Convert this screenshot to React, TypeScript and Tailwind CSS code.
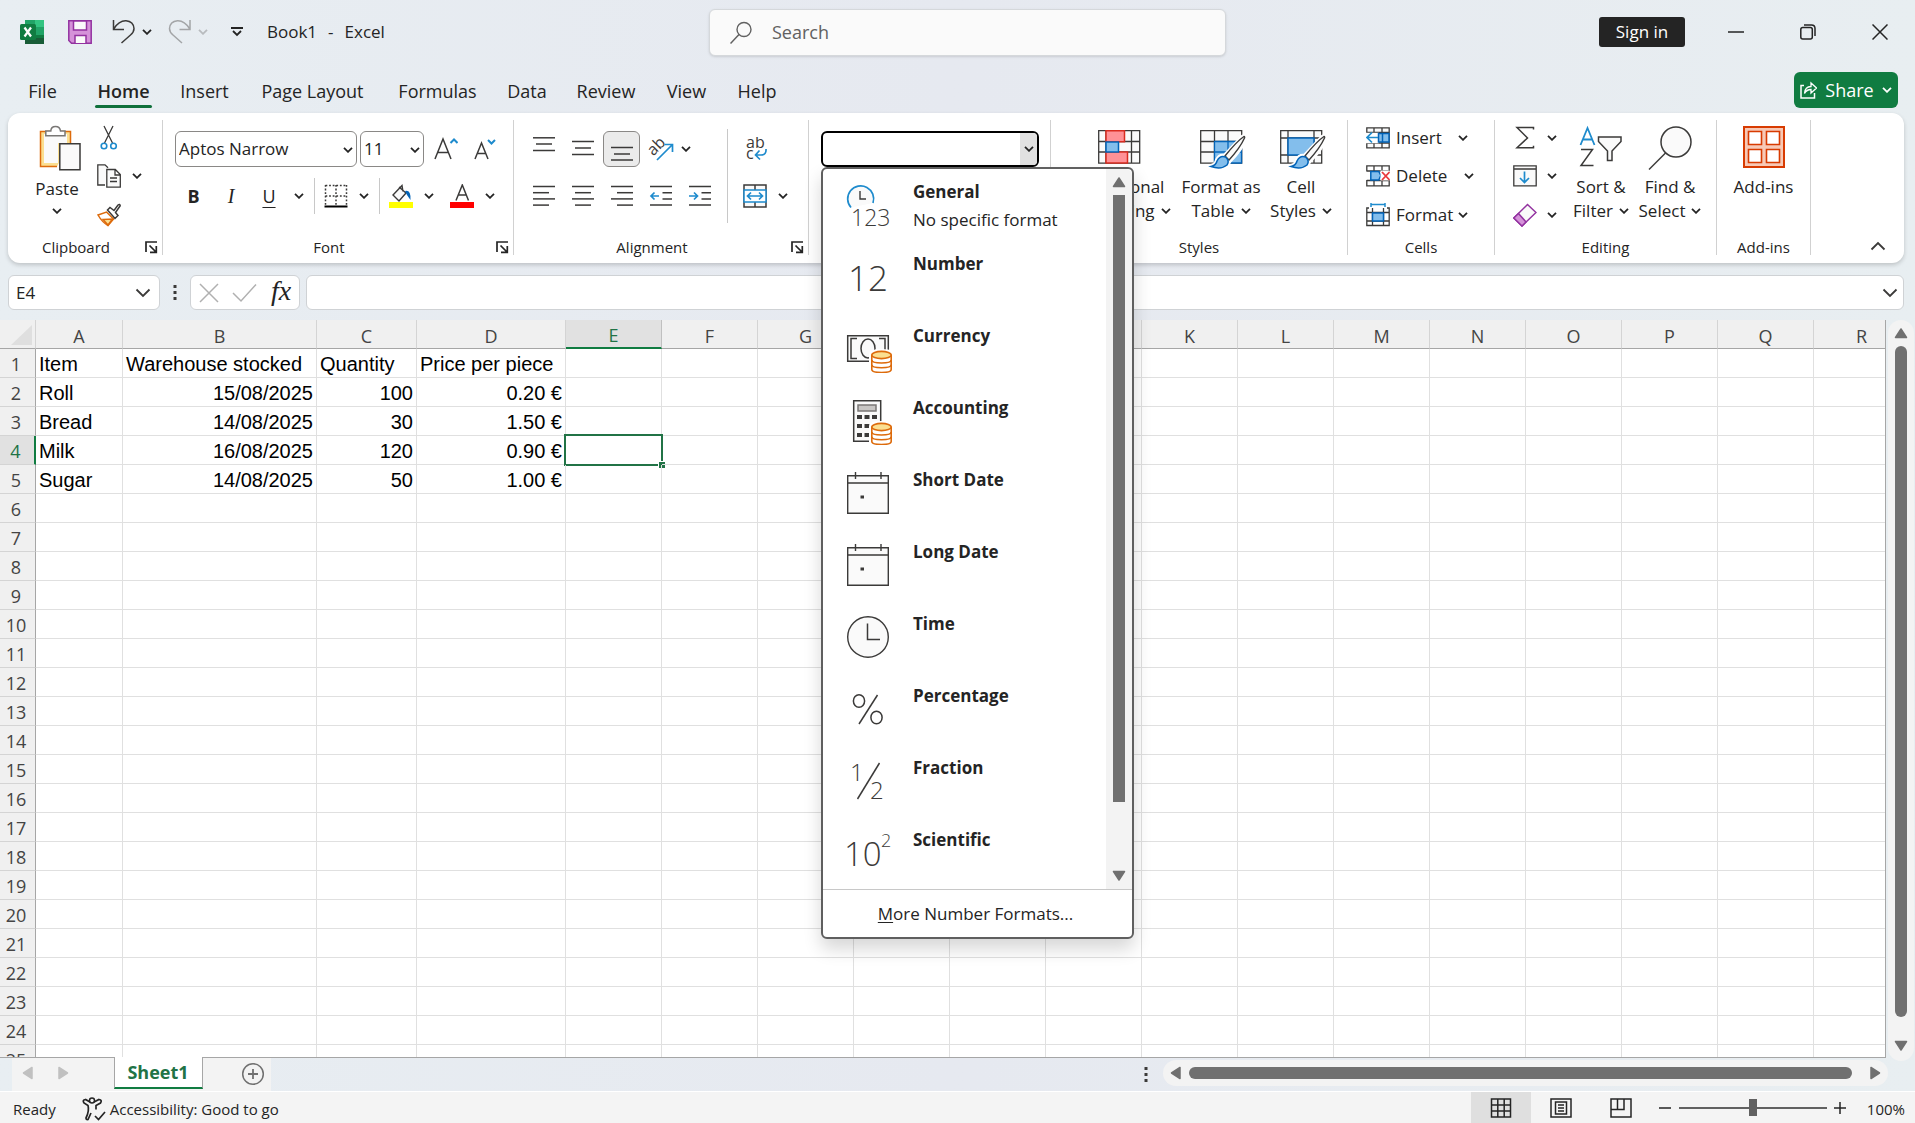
import { ReactNode, useState } from "react";

const TABS = [
  { label: "File", width: "w-[77px]" },
  { label: "Home", width: "w-[85px]" },
  { label: "Insert", width: "w-[77px]" },
  { label: "Page Layout", width: "w-[139px]" },
  { label: "Formulas", width: "w-[111px]" },
  { label: "Data", width: "w-[68px]" },
  { label: "Review", width: "w-[90px]" },
  { label: "View", width: "w-[71px]" },
  { label: "Help", width: "w-[70px]" },
];

const COLUMNS = "ABCDEFGHIJKLMNOPQR".split("");
const ROW_COUNT = 25;

const COLUMN_WIDTHS: Record<string, string> = {
  A: "w-[87px]",
  B: "w-[194px]",
  C: "w-[100px]",
  D: "w-[149px]",
};

const SHEET: Record<number, string[]> = {
  1: ["Item", "Warehouse stocked", "Quantity", "Price per piece"],
  2: ["Roll", "15/08/2025", "100", "0.20 €"],
  3: ["Bread", "14/08/2025", "30", "1.50 €"],
  4: ["Milk", "16/08/2025", "120", "0.90 €"],
  5: ["Sugar", "14/08/2025", "50", "1.00 €"],
};

const INK = "#3b3a39";
const BLUE = "#1e8bcd";

type IconProps = { children: ReactNode; w?: number; h?: number; className?: string };

const Icon = ({ children, w = 24, h = 24, className = "" }: IconProps) => (
  <svg
    width={w}
    height={h}
    viewBox={`0 0 ${w} ${h}`}
    fill="none"
    stroke={INK}
    strokeWidth="1.5"
    className={`shrink-0 ${className}`}
    aria-hidden="true"
  >
    {children}
  </svg>
);

const Chevron = ({ color = "#242424", className = "" }) => (
  <Icon w={10} h={6} className={className}>
    <path d="M1 .8l4 4 4-4" stroke={color} strokeWidth="1.8" />
  </Icon>
);

const WideChevron = () => (
  <Icon w={16} h={10}>
    <path d="M1.5 1.5L8 8l6.500-6.500" strokeWidth="1.800" />
  </Icon>
);

const Triangle = ({ d, color = "#707070" }: { d: string; color?: string }) => (
  <Icon w={14} h={14}>
    <path d={d} fill={color} stroke={color} strokeLinejoin="round" />
  </Icon>
);

const UP = "M7 3L12.500 11.500H1.500Z";
const DOWN = "M7 11L1.500 2.500H12.500Z";
const LEFT = "M2.500 7L11 1.500V12.500Z";
const RIGHT = "M11.500 7L3 1.500V12.500Z";

const Dots = () => (
  <svg width="4" height="16" viewBox="0 0 4 16" fill="#3b3a39" aria-hidden="true">
    <path d="M.5 0h3v3h-3zM.5 6h3v3h-3zM.5 12h3v3h-3z" />
  </svg>
);

const Lines = ({ rows }: { rows: [number, number, number][] }) => (
  <Icon>
    {rows.map(([x1, x2, y]) => (
      <path key={y} d={`M${x1} ${y}H${x2}`} />
    ))}
  </Icon>
);

const IconButton = ({
  label,
  className = "",
  children,
}: {
  label: string;
  className?: string;
  children: ReactNode;
}) => (
  <button type="button" aria-label={label} className={`flex items-center justify-center ${className}`}>
    {children}
  </button>
);

const Divider = ({ className }: { className: string }) => (
  <div className={`w-px shrink-0 bg-[#c8c8c8] ${className}`} />
);

const Group = ({
  title,
  width,
  launcher = false,
  children,
}: {
  title: string;
  width: string;
  launcher?: boolean;
  children: ReactNode;
}) => (
  <section aria-label={title} className={`flex shrink-0 flex-col border-r border-[#d1d1d1] ${width}`}>
    <div className="flex-1">{children}</div>
    <div className="flex h-4 items-center">
      <p className="flex-1 text-center text-[15px] leading-4">{title}</p>
      {launcher && (
        <IconButton label={`${title} settings`} className="mr-1 w-[14px]">
          <Icon w={13} h={13}>
            <path d="M1 11V1h11M4.500 4.500L11 11M11.300 5v6.300H5" stroke="#242424" strokeWidth="1.700" />
          </Icon>
        </IconButton>
      )}
    </div>
  </section>
);

const BigButton = ({
  icon,
  lines,
  width,
  chevron = true,
}: {
  icon: ReactNode;
  lines: string[];
  width: string;
  chevron?: boolean;
}) => (
  <button type="button" className={`flex shrink-0 flex-col items-center pt-[5px] text-[17px] leading-6 ${width}`}>
    <span className="flex h-[50px] items-start">{icon}</span>
    {lines.map((line, i) => (
      <span key={line} className="flex items-center gap-[6px] whitespace-nowrap">
        {line}
        {chevron && i === lines.length - 1 && <Chevron />}
      </span>
    ))}
  </button>
);

const Brush = () => (
  <g>
    <path d="M44 12L26 31l4.500 4.500Q42 24 46 13.500Q46 11 44 12Z" fill="#fff" stroke="#fff" strokeWidth="5" />
    <path d="M12 41Q17 40 18 35Q21 29 27 31.500Q32 36 28 41Q22 46 12 41Z" fill="#83beec" stroke="#fff" strokeWidth="4" />
    <path d="M45 11.500Q38 16 26 31l4 4Q41 23 45.500 13Q46 11.500 45 11.500Z" fill="#fafafa" strokeWidth="1.400" />
    <path d="M12 41.500Q17 40.500 18 36Q21 30 26.500 32Q31 36 28 40Q22 45 12 41.500Z" fill="#83beec" stroke="#0364b8" />
  </g>
);

const CellsIcon = ({ kind }: { kind: "insert" | "delete" | "format" }) => (
  <Icon>
    {kind === "insert" && (
      <>
        <path d="M.8 7V1.800h22.400v20H.8V16M.8 6.500h22.400M.8 17h22.400M8 2v20M16 2v20" fill="#fafafa" strokeWidth="1.300" />
        <path d="M0 7.500h12v9H0z" fill="#fff" stroke="#fff" />
        <path d="M12.500 7.500H23v8.500H12.500z" fill="#83beec" stroke="#0364b8" />
        <path d="M16.500 7.500v8.500" stroke="#0364b8" />
        <path d="M12 11.500H1M6 6.500l-5 5 5 5" stroke={BLUE} strokeWidth="1.700" />
      </>
    )}
    {kind === "delete" && (
      <>
        <path d="M.8 7.500V1.800h22.400v5.700M.8 16v5.800h22.400V16M.8 7h22M.8 16.500h22M8 2v5M16 2v5M8 17v5M16 17v5" strokeWidth="1.300" />
        <path d="M4.800 7.500h8l2 4-2 4.500h-8z" fill="#83beec" stroke="#0364b8" />
        <path d="M14.500 6.500h9v10h-9z" fill="#fff" stroke="none" />
        <path d="M16 8l7.500 8M23.500 8L16 16" stroke="#e8383d" strokeWidth="1.800" />
      </>
    )}
    {kind === "format" && (
      <>
        <path d="M3 5H.8v17.500h22.400V5H21M.8 9.500h22.400M.8 18h22.400M6.500 5v17.500M17.500 5v17.500" strokeWidth="1.300" />
        <path d="M6.500 10h11v8h-11z" fill="#83beec" stroke="#0364b8" />
        <path d="M5 1.500h14M5 0v4M19 0v4" stroke={BLUE} />
      </>
    )}
  </Icon>
);

const Coins = () => (
  <g stroke="#dd6b0c" strokeWidth="1.600">
    <path d="M25 29Q25 24 37.500 24T50 29v20H25z" fill="#fff" stroke="none" />
    <path d="M27.800 30v14.500c0 4 19.400 4 19.400 0V30" fill="#fff" />
    <ellipse cx="37.500" cy="30" rx="9.700" ry="3.600" fill="#fbdf91" />
    <path d="M27.800 35c0 4 19.400 4 19.400 0M27.800 39.800c0 4 19.400 4 19.400 0" />
  </g>
);

const Calendar = () => (
  <Icon w={48} h={48}>
    <path d="M3.700 6.700h40.600v37.600H3.700zM3.700 14h40.600M11.500 3v7M37 3v7" fill="#fafafa" strokeWidth="1.400" />
    <path d="M16.500 26.500h3.500v3h-3.500z" fill={INK} stroke="none" />
  </Icon>
);

const GlyphText = ({ x, y, size, children }: { x: number; y: number; size: number; children: string }) => (
  <text x={x} y={y} fontSize={size} fontFamily="Open Sans, sans-serif" fontWeight="300" fill={INK} stroke="none">
    {children}
  </text>
);

const FORMATS: { name: string; hint?: string; icon: ReactNode }[] = [
  {
    name: "General",
    hint: "No specific format",
    icon: (
      <Icon w={48} h={48}>
        <path d="M7 26.500A13 13 0 1 1 29 22" fill="#fafafa" stroke={BLUE} strokeWidth="1.700" />
        <path d="M16 10v8h6" strokeWidth="1.400" />
        <GlyphText x={7} y={45} size={23}>123</GlyphText>
      </Icon>
    ),
  },
  {
    name: "Number",
    icon: (
      <Icon w={48} h={48}>
        <GlyphText x={4} y={38} size={35}>12</GlyphText>
      </Icon>
    ),
  },
  {
    name: "Currency",
    icon: (
      <Icon w={48} h={48}>
        <path d="M3.700 10.700h40.600v25.600H3.700z" fill="#fafafa" />
        <path d="M13 13.500H7v20h6M35 13.500h6v20h-6" />
        <ellipse cx="24" cy="23.500" rx="7" ry="9.500" />
        <Coins />
      </Icon>
    ),
  },
  {
    name: "Accounting",
    icon: (
      <Icon w={48} h={48}>
        <path d="M9.700 3.700h27v40.600h-27z" fill="#fafafa" />
        <path d="M14 8h18v6H14z" fill="#c8c6c4" stroke="#797775" />
        <path
          d="M13 18h5v4h-5zM20.500 18h5v4h-5zM28 18h5v4h-5zM13 27h5v4h-5zM20.500 27h5v4h-5zM13 36h5v4h-5zM20.500 36h5v4h-5z"
          fill={INK}
          stroke="none"
        />
        <Coins />
      </Icon>
    ),
  },
  { name: "Short Date", icon: <Calendar /> },
  { name: "Long Date", icon: <Calendar /> },
  {
    name: "Time",
    icon: (
      <Icon w={48} h={48}>
        <circle cx="24" cy="24" r="20.300" fill="#fafafa" strokeWidth="1.400" />
        <path d="M23.500 10.500v16h12.500" />
      </Icon>
    ),
  },
  {
    name: "Percentage",
    icon: (
      <Icon w={48} h={48}>
        <ellipse cx="15" cy="16" rx="5.600" ry="6.300" />
        <ellipse cx="32.500" cy="32.500" rx="5.600" ry="6.300" />
        <path d="M33.500 10L15 39" />
      </Icon>
    ),
  },
  {
    name: "Fraction",
    icon: (
      <Icon w={48} h={48}>
        <GlyphText x={6} y={24} size={24}>1</GlyphText>
        <GlyphText x={26} y={42} size={24}>2</GlyphText>
        <path d="M35.500 6L13.500 42" />
      </Icon>
    ),
  },
  {
    name: "Scientific",
    icon: (
      <Icon w={48} h={48}>
        <GlyphText x={0} y={37} size={33}>10</GlyphText>
        <GlyphText x={37} y={18} size={18}>2</GlyphText>
      </Icon>
    ),
  },
];

function TitleBar() {
  return (
    <header className="flex h-16 items-start pl-5">
      <div className="flex h-16 flex-1 items-center">
        <Icon className="mr-6">
          <g stroke="none">
            <path d="M5 0h19v24H5z" fill="#21a366" />
            <path d="M15 0h9v7h-9z" fill="#33c481" />
            <path d="M15 7h9v8h-9z" fill="#21a366" />
            <path d="M5 7h10v8H5z" fill="#107c41" />
            <path d="M5 15h19v9H5z" fill="#185c37" />
            <path d="M15 15h9v3h-9z" fill="#107c41" />
            <rect x="0" y="4" width="16" height="16" rx="1.500" fill="#107c41" />
            <path d="M4.500 7.500l6.500 9M11 7.500l-6.500 9" stroke="#fff" strokeWidth="2.200" />
          </g>
        </Icon>
        <IconButton label="Save" className="mr-5">
          <Icon>
            <path d="M.8 .8h22.400v22.400H3.500L.8 20.500z" fill="#d592d9" stroke="#9332a0" />
            <path d="M5.500 1h13v9h-13zM7 23v-7.500h11V23" fill="#fafafa" stroke="#9332a0" />
          </Icon>
        </IconButton>
        <IconButton label="Undo" className="mr-px">
          <Icon>
            <path d="M1.500 0v9.500H12M1.700 9Q7 .5 14 .8Q21.500 1.500 22 8.500Q22 12 18.500 15L9.500 23" />
          </Icon>
        </IconButton>
        <IconButton label="Undo history" className="w-5"><Chevron /></IconButton>
        <IconButton label="Redo" className="ml-[11px] mr-1">
          <Icon>
            <path d="M22 0v9.500H11.500M21.800 9Q16.500 .5 9.500 .8Q2 1.500 1.500 8.500Q1.500 12 5 15l9 8" stroke="#a3a5a7" />
          </Icon>
        </IconButton>
        <IconButton label="Redo history" className="w-[14px]"><Chevron color="#b8bbbe" /></IconButton>
        <IconButton label="Customize toolbar" className="ml-[21px]">
          <Icon w={12} h={10}>
            <path d="M0 1h12M2 4l4 4 4-4" stroke="#242424" strokeWidth="1.800" />
          </Icon>
        </IconButton>
        <h1 className="ml-6 flex gap-[11px] text-[17px]">
          <span>Book1</span>
          <span>-</span>
          <span>Excel</span>
        </h1>
      </div>

      <label className="mt-[9px] flex h-[47px] w-[517px] items-center gap-5 rounded-md border border-[#d5d8db] bg-[#fafafa] pl-5 shadow-sm">
        <Icon w={22} h={24}>
          <circle cx="14" cy="8.500" r="7" stroke="#616161" strokeWidth="1.400" />
          <path d="M9 13.500L.5 22.500" stroke="#616161" />
        </Icon>
        <input
          type="text"
          aria-label="Search"
          placeholder="Search"
          className="w-full bg-transparent text-[18px] outline-none placeholder:text-[#616161]"
        />
      </label>

      <div className="flex h-16 flex-1 items-center justify-end">
        <button type="button" className="mr-[43px] h-[30px] w-[86px] rounded-[3px] bg-[#242424] text-[17px] leading-[30px] text-white">
          Sign in
        </button>
        <IconButton label="Minimize" className="mr-14">
          <Icon w={16} h={16}><path d="M0 8h16" stroke="#242424" /></Icon>
        </IconButton>
        <IconButton label="Restore" className="mr-14">
          <Icon w={16} h={16}>
            <rect x=".8" y="3.500" width="11.500" height="11.500" rx="2" stroke="#242424" />
            <path d="M4 1h7.500Q15 1 15 4.500V12" stroke="#242424" />
          </Icon>
        </IconButton>
        <IconButton label="Close" className="mr-[27px]">
          <Icon w={16} h={16}><path d="M.5 .5l15 15M15.500 .5l-15 15" stroke="#242424" /></Icon>
        </IconButton>
      </div>
    </header>
  );
}

function TabBar() {
  return (
    <nav className="flex h-[49px] items-start pl-1 pt-2 pr-[17px]">
      {TABS.map((tab) => (
        <button
          key={tab.label}
          type="button"
          className={`flex h-9 shrink-0 flex-col items-center justify-end whitespace-nowrap text-[18px] leading-7 ${tab.width} ${
            tab.label === "Home" ? "font-semibold" : ""
          }`}
        >
          {tab.label}
          <span className={`h-[3px] w-[57px] rounded-full ${tab.label === "Home" ? "bg-[#0f703b]" : ""}`} />
        </button>
      ))}
      <button
        type="button"
        className="ml-auto flex h-9 w-[104px] items-center justify-center gap-2 rounded-md bg-[#107c41] text-[18px] text-white"
      >
        <Icon w={17} h={18}>
          <path d="M4 4.500H1v12.500h13.500V12" stroke="#fff" />
          <path d="M4.500 12.500Q5 5.500 11 5.500V2l5.500 5-5.500 5V8.500Q6.500 8.500 4.500 12.500Z" stroke="#fff" strokeWidth="1.300" />
        </Icon>
        Share
        <Chevron color="#fff" />
      </button>
    </nav>
  );
}

function NumberFormatMenu() {
  return (
    <div
      role="listbox"
      aria-label="Number formats"
      className="absolute left-0 top-full z-20 w-[313px] rounded-md border-2 border-[#5f5f5f] bg-white shadow-[0_10px_18px_rgba(0,0,0,0.16)]"
    >
      <div className="flex">
        <div className="flex-1">
          {FORMATS.map(({ name, hint, icon }) => (
            <button
              key={name}
              type="button"
              role="option"
              aria-selected={false}
              className="flex h-[72px] w-full gap-[21px] pl-[21px] text-left text-[17px] leading-7"
            >
              <span className="pt-3">{icon}</span>
              <span className="flex flex-col pt-[9px]">
                <span className="font-bold">{name}</span>
                {hint && <span>{hint}</span>}
              </span>
            </button>
          ))}
        </div>
        <div className="flex w-[26px] flex-col items-center justify-between rounded-tr-md bg-[#f3f3f3] py-[6px]">
          <Triangle d={UP} />
          <div className="mb-[67px] mt-[6px] w-3 flex-1 bg-[#707070]" />
          <Triangle d={DOWN} />
        </div>
      </div>
      <button type="button" className="block h-12 w-full border-t border-[#c8c8c8] pr-1 text-center text-[17px]">
        <span className="underline underline-offset-2">M</span>ore Number Formats...
      </button>
    </div>
  );
}

function Ribbon() {
  return (
    <div className="mx-2 mr-[11px] flex h-[150px] rounded-xl bg-white pb-2 pt-[7px] shadow-[0_2px_4px_rgba(0,0,0,0.18)]">
      <Group title="Clipboard" width="w-[155px]" launcher>
        <div className="flex pl-6">
          <button type="button" className="flex w-[50px] flex-col items-center pt-[5px] text-[17px]">
            <Icon w={42} h={46} className="ml-[6px]">
              <path d="M18 41.500H1.500v-35h30V18" fill="#fbdf91" stroke="#dd6b0c" />
              <path d="M5 9h23v9H19v20H5z" fill="#fafafa" stroke="none" />
              <path d="M6.800 10.800V6h5Q12 1.500 16.500 1.500T21.500 6H26v4.800z" fill="#fff" stroke="#797775" />
              <path d="M20.800 18.800H41v26H20.800z" fill="#fafafa" />
            </Icon>
            <span className="leading-9">Paste</span>
            <Chevron className="mt-px" />
          </button>
          <div className="flex flex-col pl-[13px]">
            <IconButton label="Cut" className="h-9 w-[28px]">
              <Icon w={18} h={26}>
                <path d="M4 1l8.500 17M13 1L4.500 18" strokeWidth="1.300" />
                <circle cx="4" cy="21" r="2.800" stroke={BLUE} strokeWidth="1.600" />
                <circle cx="13.500" cy="21" r="2.800" stroke={BLUE} strokeWidth="1.600" />
              </Icon>
            </IconButton>
            <div className="flex h-[39px] items-center">
              <IconButton label="Copy" className="w-[28px]">
                <Icon>
                  <path d="M8 21H.8V.8H8l3 3" fill="#fafafa" strokeWidth="1.300" />
                  <path d="M9.800 5.500h8.500l5 5v12.700H9.800zM18 5.500v5.500h5M13 14h7M13 17.500h7" fill="#fafafa" strokeWidth="1.300" />
                </Icon>
              </IconButton>
              <IconButton label="Copy options" className="w-7"><Chevron /></IconButton>
            </div>
            <IconButton label="Format painter" className="h-[39px] w-[28px]">
              <Icon>
                <path d="M1 12l8.500-3 7 7L11 22.500Q5 19 1 12Z" fill="#fff" stroke="#dd6b0c" />
                <path d="M6 16.500l9.500-.5-4.500 6z" fill="#fbdf91" stroke="#dd6b0c" />
                <path d="M10.500 7L13 4.500l4 3 4-5.500q2-1.500 2.200.8L18.500 9.500l2.500 3-3 3z" fill="#fff" />
              </Icon>
            </IconButton>
          </div>
        </div>
      </Group>

      <Group title="Font" width="w-[351px]" launcher>
        <div className="flex flex-col gap-[11px] pl-3 pt-[11px]">
          <div className="flex h-9 items-center">
            <div className="relative mr-[3px]">
              <select aria-label="Font name" className="h-9 w-[182px] appearance-none rounded-md border border-[#8a8886] bg-white pl-[3px] text-[17px]">
                <option>Aptos Narrow</option>
              </select>
              <Chevron className="pointer-events-none absolute right-1 top-4" />
            </div>
            <div className="relative mr-[3px]">
              <select aria-label="Font size" className="h-9 w-[64px] appearance-none rounded-md border border-[#8a8886] bg-white pl-[3px] text-[17px]">
                <option>11</option>
              </select>
              <Chevron className="pointer-events-none absolute right-1 top-4" />
            </div>
            <IconButton label="Increase font size" className="w-[38px]">
              <Icon>
                <path d="M1 22L9 2l8 20M3.800 15.500h10.400" />
                <path d="M16.500 6l3.500-3.500L23.500 6" stroke={BLUE} strokeWidth="2" />
              </Icon>
            </IconButton>
            <IconButton label="Decrease font size" className="w-[38px]">
              <Icon>
                <path d="M3 22l6.500-16L16 22M5.300 16.500h8.400" />
                <path d="M16 3l3.500 3.500L23 3" stroke={BLUE} strokeWidth="2" />
              </Icon>
            </IconButton>
          </div>
          <div className="flex h-9 items-center">
            <button type="button" aria-label="Bold" className="w-[37px] text-[18px] font-bold">B</button>
            <button type="button" aria-label="Italic" className="w-[38px] font-['Liberation_Serif',serif] text-[20px] italic">I</button>
            <button type="button" aria-label="Underline" className="w-[38px] text-[18px] underline underline-offset-4">U</button>
            <IconButton label="Underline style" className="w-[22px]"><Chevron /></IconButton>
            <Divider className="ml-1 mr-[2px] h-9" />
            <IconButton label="Borders" className="w-[38px]">
              <Icon>
                <path d="M1.500 1.500h21M1.500 12h21M1.500 1v20M12 1v20M22.500 1v20" strokeDasharray="1.800 1.800" />
                <path d="M.5 22.500h23" stroke="#000" strokeWidth="2" />
              </Icon>
            </IconButton>
            <IconButton label="Border style" className="w-[18px]"><Chevron /></IconButton>
            <Divider className="ml-[6px] mr-[2px] h-9" />
            <IconButton label="Fill color" className="w-[38px]">
              <Icon>
                <path d="M10 3l7 6-7 8-6-6 9-9.500 1 6" fill="#fafafa" strokeWidth="1.400" />
                <path d="M16 7q6-1.500 5.500 9-4-5-5.500-9" fill="#0364b8" stroke="none" />
                <path d="M0 18h24v6H0z" fill="#ffff00" stroke="none" />
              </Icon>
            </IconButton>
            <IconButton label="Fill color options" className="w-[18px]"><Chevron /></IconButton>
            <IconButton label="Font color" className="ml-[5px] w-[38px]">
              <Icon>
                <path d="M6 16.500L12.300 1l6.200 15.500M8 11h8.500" />
                <path d="M0 18h24v6H0z" fill="#ff0000" stroke="none" />
              </Icon>
            </IconButton>
            <IconButton label="Font color options" className="w-[18px]"><Chevron /></IconButton>
          </div>
        </div>
      </Group>

      <Group title="Alignment" width="w-[295px]" launcher>
        <div className="flex pl-[10px] pt-[9px]">
          <div className="flex flex-col gap-[11px] pt-[2px]">
            <div className="flex h-9 items-center">
              <IconButton label="Top align" className="w-[39px]">
                <Lines rows={[[1, 23, 0.8], [4, 20, 7], [1, 23, 13.5]]} />
              </IconButton>
              <IconButton label="Middle align" className="w-[39px]">
                <Lines rows={[[1, 23, 4.5], [4, 20, 11], [1, 23, 17.500]]} />
              </IconButton>
              <IconButton label="Bottom align" className="mx-px h-9 w-[37px] rounded-md border border-[#8a8886] bg-[#ebebeb]">
                <Lines rows={[[1, 23, 10.5], [4, 20, 17], [1, 23, 23]]} />
              </IconButton>
              <IconButton label="Orientation" className="w-[39px]">
                <Icon w={26} h={26}>
                  <text x="3" y="19" transform="rotate(-45 6 17)" fontSize="16" fill={INK} stroke="none" fontFamily="Open Sans, sans-serif">ab</text>
                  <path d="M9 24L24 9M16.500 8.500H24.500V16" stroke={BLUE} strokeWidth="1.700" />
                </Icon>
              </IconButton>
              <IconButton label="Orientation options" className="w-3"><Chevron /></IconButton>
            </div>
            <div className="flex h-9 items-center">
              <IconButton label="Align left" className="w-[39px]">
                <Lines rows={[[1, 23, 2.500], [1, 17, 8.700], [1, 23, 14.900], [1, 17, 21.100]]} />
              </IconButton>
              <IconButton label="Center" className="w-[39px]">
                <Lines rows={[[1, 23, 2.500], [4, 20, 8.700], [1, 23, 14.900], [4, 20, 21.100]]} />
              </IconButton>
              <IconButton label="Align right" className="w-[39px]">
                <Lines rows={[[1, 23, 2.500], [7, 23, 8.700], [1, 23, 14.900], [7, 23, 21.100]]} />
              </IconButton>
              <IconButton label="Decrease indent" className="w-[39px]">
                <Icon>
                  <path d="M1 2.500h22M13.500 8.700H23M13.500 14.900H23M1 21.100h22" />
                  <path d="M10 12H2M5.500 8.500L2 12l3.500 3.500" stroke={BLUE} strokeWidth="1.700" />
                </Icon>
              </IconButton>
              <IconButton label="Increase indent" className="w-[39px]">
                <Icon>
                  <path d="M1 2.500h22M13.500 8.700H23M13.500 14.900H23M1 21.100h22" />
                  <path d="M1 12h8.500M6 8.500L9.500 12 6 15.500" stroke={BLUE} strokeWidth="1.700" />
                </Icon>
              </IconButton>
            </div>
          </div>
          <Divider className="ml-2 mr-2 h-[94px]" />
          <div className="flex flex-col gap-[11px] pt-[2px]">
            <IconButton label="Wrap text" className="h-9 w-[40px]">
              <Icon>
                <g fill={INK} stroke="none" fontSize="16" fontFamily="Open Sans, sans-serif">
                  <text x="2" y="11">ab</text>
                  <text x="2" y="22">c</text>
                </g>
                <path d="M22 12q.5 6-5 6h-5.500M15.500 13.500L11.500 18l4.500 4.500" stroke={BLUE} strokeWidth="1.700" />
              </Icon>
            </IconButton>
            <div className="flex h-9 items-center">
              <IconButton label="Merge and center" className="w-[38px]">
                <Icon>
                  <path d="M1 1h22v22H1zM12 1v22" fill="#fafafa" />
                  <path d="M1 6h22v12H1z" fill="#fff" stroke={BLUE} />
                  <path d="M4.500 12h15M8 8.500L4.500 12 8 15.500M16 8.500l3.500 3.500-3.500 3.500" stroke={BLUE} strokeWidth="1.700" />
                </Icon>
              </IconButton>
              <IconButton label="Merge options" className="w-[18px]"><Chevron /></IconButton>
            </div>
          </div>
        </div>
      </Group>

      <Group title="Number" width="w-[242px]">
        <div className="pl-3 pt-[11px]">
          <div className="relative w-[218px]">
            <select aria-label="Number format" className="block h-9 w-full appearance-none rounded-md border-2 border-black bg-white">
              <option></option>
            </select>
            <div className="pointer-events-none absolute right-[2px] top-[2px] flex h-8 w-[17px] items-center justify-center rounded-r bg-[#e1e1e1]">
              <Chevron />
            </div>
            <NumberFormatMenu />
          </div>
        </div>
      </Group>

      <Group title="Styles" width="w-[297px]">
        <div className="flex pl-[13px]">
          <BigButton
            width="w-[110px]"
            lines={["Conditional", "Formatting"]}
            icon={
              <Icon w={44} h={46}>
                <path d="M1.700 5.700h41v32.500H1.700zM1.700 16.500h41M1.700 27h41M9 6v32M34.500 6v32" fill="#fafafa" strokeWidth="1.300" />
                <path d="M9 5.700h18.500v11H9zM9 27h21.500v11H9z" fill="#ff9196" stroke="#d92c20" />
                <path d="M9 17h12.500v10H9z" fill="#83beec" stroke="#0364b8" />
              </Icon>
            }
          />
          <BigButton
            width="w-[94px]"
            lines={["Format as", "Table"]}
            icon={
              <Icon w={48} h={46} className="ml-1">
                <path d="M1.700 5.700h41v32.500H1.700zM1.700 16.500h41M1.700 27h41M15.500 6v32M29 6v32" fill="#fafafa" strokeWidth="1.300" />
                <path d="M15.500 16.500h27V38h-27zM15.500 27h27M29 16.500V38" fill="#83beec" stroke="#0364b8" strokeWidth="1.300" />
                <Brush />
              </Icon>
            }
          />
          <BigButton
            width="w-[66px]"
            lines={["Cell", "Styles"]}
            icon={
              <Icon w={48} h={46} className="ml-1">
                <path d="M1.700 5.700h41v32.500H1.700zM1.700 13h41M1.700 30h41M9 6v32M35 6v32" fill="#fafafa" strokeWidth="1.300" />
                <path d="M9 13h26v17H9z" fill="#83beec" stroke="#0364b8" />
                <Brush />
              </Icon>
            }
          />
        </div>
      </Group>

      <Group title="Cells" width="w-[147px]">
        <div className="flex flex-col pl-[18px] text-[17px]">
          <button type="button" className="flex h-9 items-center">
            <CellsIcon kind="insert" />
            <span className="w-[62px] pl-[6px] text-left">Insert</span>
            <Chevron className="ml-[6px]" />
          </button>
          <button type="button" className="flex h-[39px] items-center">
            <CellsIcon kind="delete" />
            <span className="w-[68px] pl-[6px] text-left">Delete</span>
            <Chevron className="ml-[6px]" />
          </button>
          <button type="button" className="flex h-[39px] items-center">
            <CellsIcon kind="format" />
            <span className="w-[62px] pl-[6px] text-left">Format</span>
            <Chevron className="ml-[6px]" />
          </button>
        </div>
      </Group>

      <Group title="Editing" width="w-[222px]">
        <div className="flex pl-[18px]">
          <div className="flex w-[44px] flex-col">
            <button type="button" aria-label="AutoSum" className="flex h-9 items-center justify-between">
              <Icon>
                <path d="M20.500 3.500V1.500H4L14.500 12 4 21.800h16.500v-2" />
              </Icon>
              <Chevron />
            </button>
            <button type="button" aria-label="Fill" className="flex h-[39px] items-center justify-between">
              <Icon>
                <path d="M.8 1.800h22.400v20H.8zM.8 5h22.400" fill="#fafafa" strokeWidth="1.300" />
                <path d="M11.500 7.500v11M7 14l4.500 4.500L16 14" stroke={BLUE} strokeWidth="1.700" />
              </Icon>
              <Chevron />
            </button>
            <button type="button" aria-label="Clear" className="flex h-[39px] items-center justify-between">
              <Icon>
                <path d="M14.500 1.500L23 9.500 9 23 .8 15z" fill="#fafafa" stroke="#9332a0" />
                <path d="M5.500 10.500L13 19l-4 4-8.200-8z" fill="#d592d9" stroke="#9332a0" />
              </Icon>
              <Chevron />
            </button>
          </div>
          <BigButton
            width="w-[72px] ml-2"
            lines={["Sort &", "Filter"]}
            icon={
              <Icon w={44} h={46}>
                <path d="M1.500 20L8.500 3l7 17M4 14.500h9" stroke={BLUE} strokeWidth="1.800" />
                <path d="M2 24.500h11.500L2 40.500h12.500" />
                <path d="M19.500 12h22.500v4.500L33 26v9.500h-4.500V26l-9-9.500z" fill="#fafafa" />
              </Icon>
            }
          />
          <BigButton
            width="w-[66px]"
            lines={["Find &", "Select"]}
            icon={
              <Icon w={44} h={46}>
                <circle cx="28" cy="17" r="15" fill="#fafafa" />
                <path d="M17.500 28L1 44.500" />
              </Icon>
            }
          />
        </div>
      </Group>

      <Group title="Add-ins" width="w-[94px]">
        <BigButton
          width="w-[93px]"
          chevron={false}
          lines={["Add-ins"]}
          icon={
            <Icon w={42} h={46}>
              <path d="M1 2h40v40H1z" fill="#f7c9b6" stroke="#d83b01" strokeWidth="2" />
              <path d="M5.500 6.500h13v13h-13zM23.500 6.500h13v13h-13zM5.500 24.500h13v13h-13zM23.500 24.500h13v13h-13z" fill="#fff" stroke="#d83b01" strokeWidth="1.600" />
            </Icon>
          }
        />
      </Group>

      <div className="flex flex-1 items-end justify-end pr-[18px]">
        <IconButton label="Collapse ribbon" className="pb-1">
          <Icon w={16} h={10}><path d="M1.500 8.500L8 2l6.500 6.500" strokeWidth="1.800" /></Icon>
        </IconButton>
      </div>
    </div>
  );
}

function FormulaBar() {
  return (
    <div className="flex items-center pb-[10px] pl-2 pr-[11px] pt-3">
      <div className="flex h-[35px] w-[152px] items-center rounded-md border border-[#cfd2d5] bg-white pl-[7px] pr-2">
        <input type="text" aria-label="Name box" defaultValue="E4" className="w-full min-w-0 bg-transparent text-[17px] outline-none" />
        <WideChevron />
      </div>
      <div className="flex w-[30px] justify-center"><Dots /></div>
      <div className="flex h-[35px] w-[110px] items-center justify-between rounded-md border border-[#cfd2d5] bg-white pl-2 pr-[6px]">
        <IconButton label="Cancel">
          <Icon w={20} h={20}><path d="M1 1l18 18M19 1L1 19" stroke="#b0b0b0" /></Icon>
        </IconButton>
        <IconButton label="Enter">
          <Icon w={25} h={20}><path d="M1 10l8 8L24 1.500" stroke="#b0b0b0" /></Icon>
        </IconButton>
        <button type="button" aria-label="Insert function" className="w-6 pb-1 text-center font-['Liberation_Serif',serif] text-[28px] italic leading-7 text-[#242424]">
          fx
        </button>
      </div>
      <div className="ml-[6px] flex h-[35px] flex-1 items-center rounded-md border border-[#cfd2d5] bg-white pr-[5px]">
        <input type="text" aria-label="Formula bar" className="w-full min-w-0 bg-transparent px-2 text-[17px] outline-none" />
        <WideChevron />
      </div>
    </div>
  );
}

function Grid() {
  return (
    <div className="flex min-h-0 flex-1">
      <div className="min-w-0 flex-1 overflow-hidden border-b border-r border-[#a6a6a6] bg-white">
        <table className="w-[1910px] table-fixed border-separate border-spacing-0">
          <colgroup>
            <col className="w-9" />
            {COLUMNS.map((col) => (
              <col key={col} className={COLUMN_WIDTHS[col] ?? "w-[96px]"} />
            ))}
          </colgroup>
          <thead>
            <tr className="h-[29px] text-[18px] leading-6 text-[#444]">
              <td className="border-b border-r border-b-[#a6a6a6] border-r-[#d4d4d4] bg-[#f0f0f0] p-0">
                <Icon w={34} h={27}>
                  <path d="M32 4v20H11z" fill="#dfdfdf" stroke="none" />
                </Icon>
              </td>
              {COLUMNS.map((col) => (
                <th
                  key={col}
                  scope="col"
                  className={`border-r p-0 pt-[3px] font-normal ${
                    col === "E"
                      ? "border-b-2 border-b-[#107c41] border-r-[#c0c0c0] bg-[#e1e1e1] text-[#217346]"
                      : "border-b border-b-[#a6a6a6] border-r-[#d4d4d4] bg-[#f0f0f0]"
                  }`}
                >
                  {col}
                </th>
              ))}
            </tr>
          </thead>
          <tbody>
            {Array.from({ length: ROW_COUNT }, (_, i) => i + 1).map((row) => (
              <tr key={row} className="h-[29px] leading-6">
                <th
                  scope="row"
                  className={`border-b p-0 pr-[3px] pt-[2px] text-[18px] font-normal ${
                    row === 4
                      ? "border-r-2 border-b-[#d4d4d4] border-r-[#107c41] bg-[#e1e1e1] text-[#217346]"
                      : "border-r border-b-[#d4d4d4] border-r-[#a6a6a6] bg-[#f0f0f0] text-[#444]"
                  }`}
                >
                  {row}
                </th>
                {COLUMNS.map((col, i) => (
                  <td
                    key={col}
                    className={`relative whitespace-nowrap border-b border-r border-[#e0e0e0] px-[3px] pb-0 pt-[2px] font-['Liberation_Sans',sans-serif] text-[20px] text-black ${
                      row > 1 && i > 0 ? "text-right" : "text-left"
                    }`}
                  >
                    {SHEET[row]?.[i]}
                    {col === "E" && row === 4 && (
                      <span className="absolute -bottom-[2px] -left-[2px] -right-[2px] -top-[2px] border-2 border-[#217346]">
                        <span className="absolute -bottom-1 -right-1 h-[7px] w-[7px] border-l border-t border-white bg-[#217346]" />
                      </span>
                    )}
                  </td>
                ))}
              </tr>
            ))}
          </tbody>
        </table>
      </div>
      <div className="-mb-[3px] ml-[2px] mr-px flex w-[26px] flex-col items-center rounded-full bg-[#f3f3f3] pb-2 pt-[6px]">
        <Triangle d={UP} />
        <div className="mb-[22px] mt-[6px] w-3 flex-1 rounded-full bg-[#707070]" />
        <Triangle d={DOWN} />
      </div>
    </div>
  );
}

function SheetBar() {
  return (
    <div className="flex h-[33px] items-start pl-3 pr-[27px]">
      <div className="flex h-full w-[259px] items-start bg-[#f3f3f3]">
        <div className="flex w-[102px] items-center gap-[21px] pl-[9px] pt-2">
          <Triangle d={LEFT} color="#c0c0c0" />
          <Triangle d={RIGHT} color="#c0c0c0" />
        </div>
        <button
          type="button"
          className="-mt-px h-8 w-[89px] border-x border-b-2 border-x-[#a6a6a6] border-b-[#107c41] bg-white pr-px text-[18px] font-bold leading-7 text-[#217346]"
        >
          Sheet1
        </button>
        <IconButton label="New sheet" className="ml-[38px] mt-1">
          <Icon>
            <circle cx="12" cy="12" r="10.300" stroke="#707070" />
            <path d="M7 12h10M12 7v10" stroke="#707070" strokeWidth="1.800" />
          </Icon>
        </IconButton>
      </div>
      <div className="ml-auto mr-[15px] pt-[9px]"><Dots /></div>
      <div className="mt-[2px] flex h-[26px] w-[725px] items-center rounded-full bg-[#f3f3f3] px-[6px]">
        <Triangle d={LEFT} />
        <div className="ml-[6px] mr-4 h-3 flex-1 rounded-full bg-[#707070]" />
        <Triangle d={RIGHT} />
      </div>
    </div>
  );
}

function StatusBar() {
  const [zoom, setZoom] = useState(100);

  return (
    <footer className="flex h-8 items-center border-t border-white bg-[#f4f4f4] pl-[13px] text-[15px] leading-5">
      <span className="pt-[2px]">Ready</span>
      <button type="button" className="ml-[26px] flex items-center gap-1 pt-[2px]">
        <Icon>
          <circle cx="10" cy="3.500" r="2.500" stroke="#242424" />
          <path
            d="M8 5L3.500 2.500Q0 3 2 6l4 2.500Q7.500 14 4 21q0 2 2 1.500L9 16M12 5l5-2.500q3.500.5 1.500 3.500L14 8.500v4M13 19l3.500 3.500L23 15"
            stroke="#242424"
            strokeWidth="1.700"
          />
        </Icon>
        Accessibility: Good to go
      </button>
      <div className="ml-auto flex h-full">
        <IconButton label="Normal view" className="w-[60px] bg-[#dfdfdf]">
          <Icon w={22} h={20}><path d="M1.500 1h19v18h-19zM1.500 7h19M1.500 13h19M7.800 1v18M14.200 1v18" stroke="#242424" /></Icon>
        </IconButton>
        <IconButton label="Page layout view" className="w-[60px]">
          <Icon w={22} h={20}><path d="M1 1h20v18H1zM5.500 4h11v12h-11zM8 7h6M8 10h6M8 13h6" stroke="#242424" /></Icon>
        </IconButton>
        <IconButton label="Page break view" className="w-[60px]">
          <Icon w={22} h={20}><path d="M1 1h20v18H1zM1 11.500h13V1M7.500 1v10.500" stroke="#242424" /></Icon>
        </IconButton>
      </div>
      <IconButton label="Zoom out" className="ml-1 w-5">
        <Icon w={12} h={12}><path d="M0 6h12" stroke="#242424" /></Icon>
      </IconButton>
      <input
        type="range"
        aria-label="Zoom"
        min={0}
        max={200}
        value={zoom}
        onChange={(e) => setZoom(Number(e.target.value))}
        className="mx-1 h-[18px] w-[148px] appearance-none bg-transparent [&::-webkit-slider-runnable-track]:h-[2px] [&::-webkit-slider-runnable-track]:bg-[#616161] [&::-webkit-slider-thumb]:-mt-2 [&::-webkit-slider-thumb]:h-[17px] [&::-webkit-slider-thumb]:w-2 [&::-webkit-slider-thumb]:appearance-none [&::-webkit-slider-thumb]:bg-[#616161]"
      />
      <IconButton label="Zoom in" className="w-[18px]">
        <Icon w={12} h={12}><path d="M0 6h12M6 0v12" stroke="#242424" /></Icon>
      </IconButton>
      <span className="w-[66px] pr-[10px] pt-[2px] text-right">{zoom}%</span>
    </footer>
  );
}

export default function App() {
  return (
    <div className="flex h-screen flex-col overflow-hidden bg-linear-to-r from-[#e8eef2] via-[#e6e9f0] to-[#e8eef1] font-['Open_Sans','Noto_Sans',sans-serif] text-[#242424]">
      <TitleBar />
      <TabBar />
      <Ribbon />
      <FormulaBar />
      <Grid />
      <SheetBar />
      <StatusBar />
    </div>
  );
}
